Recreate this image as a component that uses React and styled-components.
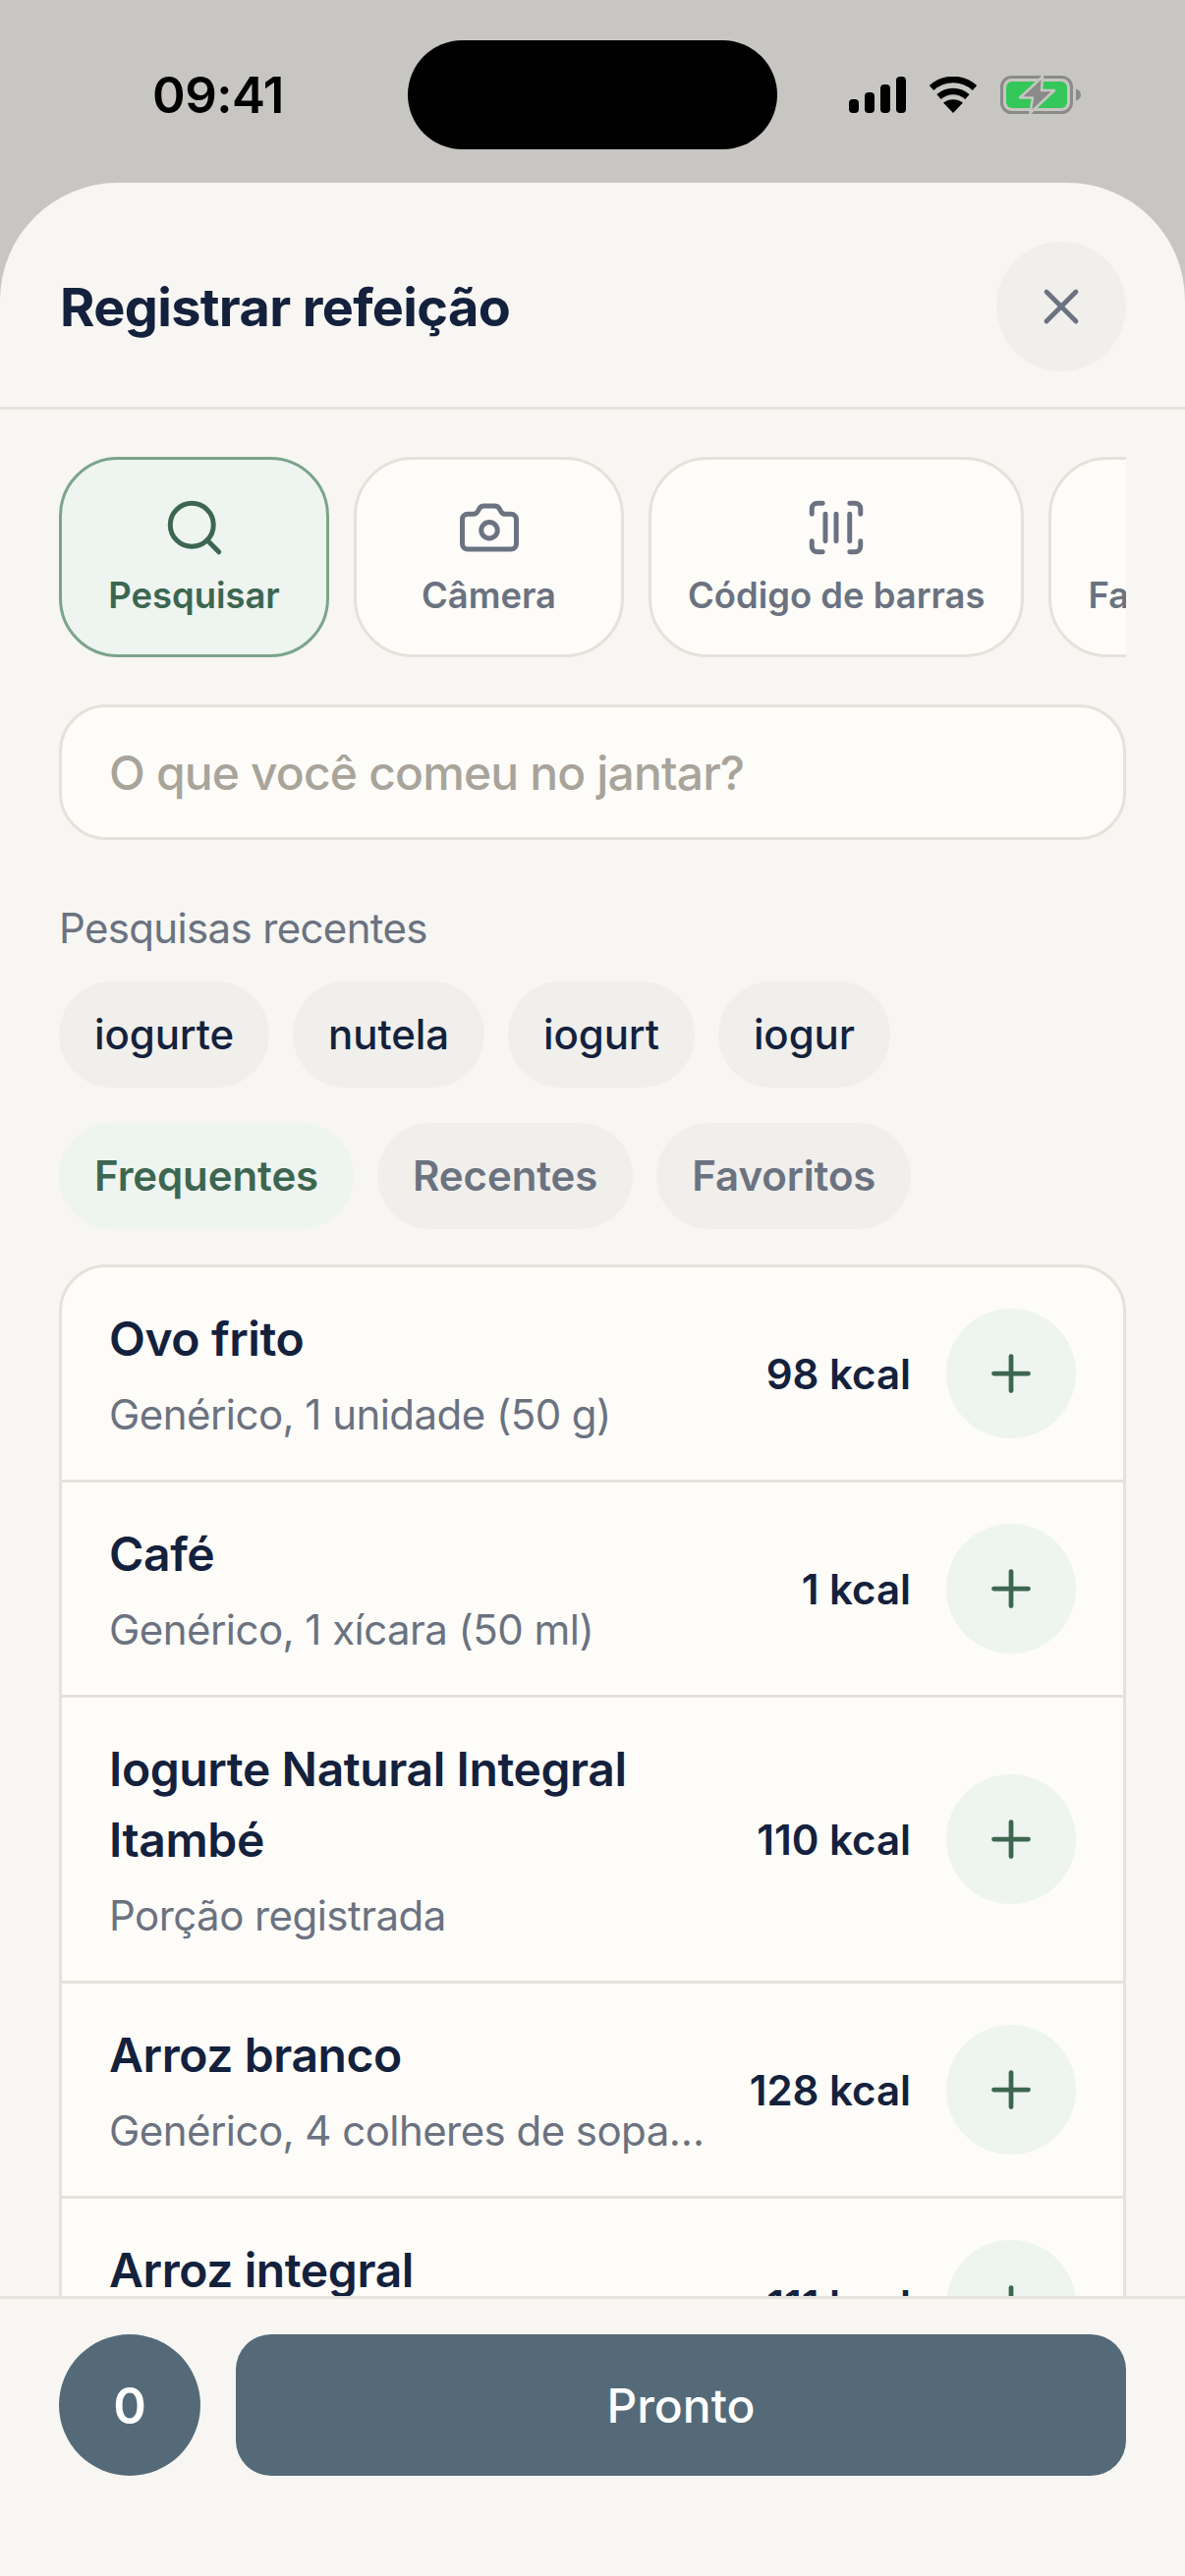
import React from 'react';
import styled, { createGlobalStyle } from 'styled-components';
import { Search, Camera, ScanBarcode, Star, X, Plus } from 'lucide-react';

const GlobalStyle = createGlobalStyle`
  html, body {
    margin: 0;
    padding: 0;
    background: #c7c6c2;
  }
  * {
    box-sizing: border-box;
  }
`;

const tabs = [
  { label: 'Pesquisar', Icon: Search, active: true },
  { label: 'Câmera', Icon: Camera },
  { label: 'Código de barras', Icon: ScanBarcode },
  { label: 'Favoritos', Icon: Star },
];

const recents = ['iogurte', 'nutela', 'iogurt', 'iogur'];

const filters = [
  { label: 'Frequentes', active: true },
  { label: 'Recentes' },
  { label: 'Favoritos' },
];

const foods = [
  { name: 'Ovo frito', detail: 'Genérico, 1 unidade (50 g)', kcal: '98 kcal' },
  { name: 'Café', detail: 'Genérico, 1 xícara (50 ml)', kcal: '1 kcal' },
  { name: 'Iogurte Natural Integral Itambé', detail: 'Porção registrada', kcal: '110 kcal' },
  { name: 'Arroz branco', detail: 'Genérico, 4 colheres de sopa (100 g)', kcal: '128 kcal' },
  { name: 'Arroz integral', detail: 'Genérico, 4 colheres de sopa (100 g)', kcal: '111 kcal' },
];

const SignalIcon = () => (
  <svg width="58" height="37" viewBox="0 0 58 37" fill="#000">
    <rect x="0" y="23" width="10" height="14" rx="4" />
    <rect x="16" y="16" width="10" height="21" rx="4" />
    <rect x="32" y="8" width="10" height="29" rx="4" />
    <rect x="48" y="0" width="10" height="37" rx="4" />
  </svg>
);

const WifiIcon = () => (
  <svg width="50" height="37" viewBox="0 0 50 37" fill="none" stroke="#000" strokeWidth="6.5">
    <path d="M3 11.5C15.5 0 34.5 0 47 11.5" />
    <path d="M10.5 20.5C19 13 31 13 39.5 20.5" />
    <path d="M25 37L15 26.5C21 22 29 22 35 26.5Z" fill="#000" stroke="none" />
  </svg>
);

const BatteryIcon = () => (
  <svg width="82" height="39" viewBox="0 0 82 39" fill="none">
    <rect x="1.5" y="1.5" width="71" height="36" rx="10" stroke="#8a8a88" strokeWidth="3" />
    <rect x="6" y="6" width="62" height="27" rx="6" fill="#34c759" />
    <path d="M77 13.5C80 14.5 82 16.5 82 19.5C82 22.5 80 24.5 77 25.5Z" fill="#8a8a88" />
    <path
      d="M43 1L20 22.5H33L30.5 38L55 15H42Z"
      fill="#8a8a88"
      stroke="#c7c6c2"
      strokeWidth="2.5"
      strokeLinejoin="round"
    />
  </svg>
);

const App = () => {
  return (
    <Page>
      <GlobalStyle />
      <StatusBar>
        <Time>09:41</Time>
        <Island />
        <StatusIcons>
          <SignalIcon />
          <WifiIcon />
          <BatteryIcon />
        </StatusIcons>
      </StatusBar>

      <Sheet>
        <Header>
          <Title>Registrar refeição</Title>
          <CloseButton>
            <X size={60} strokeWidth={1.9} color="#6b7280" />
          </CloseButton>
        </Header>

        <Body>
          <TabStrip>
            {tabs.map(({ label, Icon, active }) => (
              <Tab key={label} $active={active}>
                <Icon size={66} strokeWidth={1.8} />
                <TabLabel>{label}</TabLabel>
              </Tab>
            ))}
          </TabStrip>

          <SearchInput placeholder="O que você comeu no jantar?" readOnly />

          <SectionLabel>Pesquisas recentes</SectionLabel>
          <PillRow>
            {recents.map((term) => (
              <RecentPill key={term}>{term}</RecentPill>
            ))}
          </PillRow>

          <FilterRow>
            {filters.map(({ label, active }) => (
              <FilterPill key={label} $active={active}>{label}</FilterPill>
            ))}
          </FilterRow>

          <FoodList>
            {foods.map((food) => (
              <FoodRow key={food.name}>
                <FoodInfo>
                  <FoodName>{food.name}</FoodName>
                  <FoodDetail>{food.detail}</FoodDetail>
                </FoodInfo>
                <Kcal>{food.kcal}</Kcal>
                <AddButton>
                  <Plus size={60} strokeWidth={1.9} color="#3d6650" />
                </AddButton>
              </FoodRow>
            ))}
          </FoodList>
        </Body>

        <Footer>
          <Count>0</Count>
          <DoneButton>Pronto</DoneButton>
        </Footer>
      </Sheet>
    </Page>
  );
};

export default App;

const Page = styled.div`
  display: flex;
  flex-direction: column;
  width: 1206px;
  height: 2622px;
  overflow: hidden;
  background: #c7c6c2;
  font-family: Inter, "Noto Sans", sans-serif;
`;

const StatusBar = styled.div`
  flex: none;
  display: grid;
  grid-template-columns: 260px 376px 1fr;
  height: 186px;
  padding: 41px 106px 0 155px;
`;

const Time = styled.div`
  margin-top: 27px;
  font-size: 51px;
  line-height: 58px;
  font-weight: 600;
  letter-spacing: -0.5px;
  color: #000;
`;

const Island = styled.div`
  height: 111px;
  border-radius: 56px;
  background: #000;
`;

const StatusIcons = styled.div`
  display: flex;
  align-items: center;
  justify-content: flex-end;
  gap: 23px;
  height: 111px;
`;

const Sheet = styled.div`
  flex: 1;
  min-height: 0;
  display: flex;
  flex-direction: column;
  border-radius: 120px 120px 0 0;
  background: #f7f6f2;
`;

const Header = styled.div`
  flex: none;
  display: flex;
  align-items: center;
  justify-content: space-between;
  padding: 60px 60px 36px;
  border-bottom: 3px solid #e3e2db;
`;

const Title = styled.h1`
  margin: 2px 0 0 1px;
  font-size: 54px;
  line-height: 66px;
  font-weight: 700;
  letter-spacing: -0.65px;
  color: #14213d;
`;

const CloseButton = styled.button`
  display: flex;
  align-items: center;
  justify-content: center;
  width: 132px;
  height: 132px;
  padding: 0;
  border: none;
  border-radius: 50%;
  background: #f0efeb;
`;

const Body = styled.div`
  flex: 1;
  min-height: 0;
  overflow: hidden;
  padding: 48px 60px 0;
`;

const TabStrip = styled.div`
  display: flex;
  gap: 25px;
  overflow: hidden;
`;

const Tab = styled.div`
  flex: none;
  display: flex;
  flex-direction: column;
  align-items: center;
  gap: 12px;
  height: 204px;
  padding: 36px 37px 0;
  min-width: 275px;
  border: 3px solid ${(p) => (p.$active ? '#7ba48b' : '#e3e2db')};
  border-radius: 60px;
  background: ${(p) => (p.$active ? '#eef4f0' : '#fdfcf9')};
  color: ${(p) => (p.$active ? '#3d6650' : '#6b7280')};

  &:last-child {
    min-width: 0;
  }
`;

const TabLabel = styled.span`
  font-size: 36.4px;
  line-height: 48px;
  font-weight: 600;
`;

const SearchInput = styled.input`
  display: block;
  width: 100%;
  height: 138px;
  margin-top: 48px;
  padding: 0 48px;
  border: 3px solid #e3e2db;
  border-radius: 48px;
  background: #fdfcf9;
  font-family: inherit;
  font-size: 48px;
  font-weight: 500;
  letter-spacing: -0.85px;
  color: #14213d;
  outline: none;

  &::placeholder {
    color: #a8a49a;
    opacity: 1;
  }
`;

const SectionLabel = styled.div`
  margin-top: 60px;
  margin-bottom: 24px;
  font-size: 42px;
  line-height: 60px;
  letter-spacing: -0.65px;
  color: #6b7280;
`;

const PillRow = styled.div`
  display: flex;
  gap: 24px;
`;

const FilterRow = styled(PillRow)`
  margin-top: 36px;
`;

const RecentPill = styled.div`
  height: 108px;
  padding: 0 36px;
  border-radius: 54px;
  background: #f0efeb;
  font-size: 42px;
  line-height: 108px;
  font-weight: 500;
  letter-spacing: -0.1px;
  color: #14213d;
`;

const FilterPill = styled(RecentPill)`
  font-weight: 600;
  letter-spacing: -0.1px;
  background: ${(p) => (p.$active ? '#eef4f0' : '#f0efeb')};
  color: ${(p) => (p.$active ? '#3d6650' : '#6b7280')};
`;

const FoodList = styled.div`
  margin-top: 36px;
  border: 3px solid #e3e2db;
  border-radius: 48px;
  overflow: hidden;
  background: #fdfcf9;
`;

const FoodRow = styled.div`
  display: flex;
  align-items: center;
  padding: 36px 48px;
  border-bottom: 3px solid #e3e2db;
`;

const FoodInfo = styled.div`
  flex: 1;
  min-width: 0;
  margin: 1px 36px -1px 0;
`;

const FoodName = styled.div`
  font-size: 48px;
  line-height: 72px;
  font-weight: 600;
  letter-spacing: -0.4px;
  color: #14213d;
`;

const FoodDetail = styled.div`
  margin-top: 9px;
  font-size: 42px;
  line-height: 63px;
  letter-spacing: -0.55px;
  color: #6b7280;
  white-space: nowrap;
  overflow: hidden;
  text-overflow: ellipsis;
`;

const Kcal = styled.div`
  flex: none;
  font-size: 42px;
  font-weight: 600;
  color: #14213d;
`;

const AddButton = styled.button`
  flex: none;
  display: flex;
  align-items: center;
  justify-content: center;
  width: 132px;
  height: 132px;
  margin-left: 36px;
  padding: 0;
  border: none;
  border-radius: 50%;
  background: #eef4f0;
`;

const Footer = styled.div`
  flex: none;
  display: flex;
  gap: 36px;
  height: 285px;
  padding: 36px 60px 0;
  border-top: 3px solid #e3e2db;
  background: #f7f6f2;
`;

const Count = styled.div`
  display: flex;
  align-items: center;
  justify-content: center;
  width: 144px;
  height: 144px;
  border-radius: 50%;
  background: #546a78;
  font-size: 51px;
  font-weight: 600;
  color: #fff;
`;

const DoneButton = styled.button`
  flex: 1;
  height: 144px;
  padding: 0;
  border: none;
  border-radius: 36px;
  background: #546a78;
  font-family: inherit;
  font-size: 48px;
  font-weight: 500;
  color: #fff;
`;
